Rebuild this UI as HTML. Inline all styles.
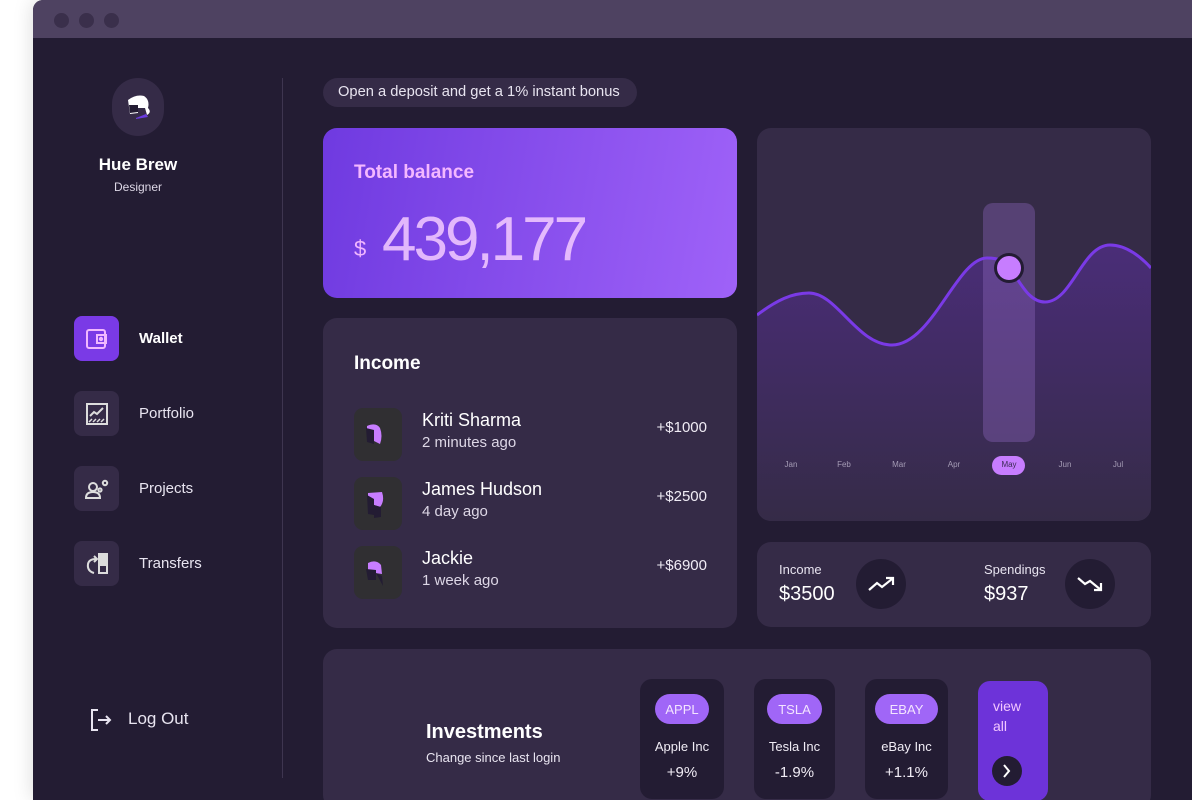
<!DOCTYPE html>
<html><head><meta charset="utf-8"><style>
*{margin:0;padding:0;box-sizing:border-box}
body{width:1192px;height:773px;overflow:hidden;background:#fff;font-family:"Liberation Sans",sans-serif;position:relative}
.win{position:absolute;left:33px;top:0;width:1175px;height:800px;background:#231c33;border-radius:10px 10px 0 0;overflow:hidden;box-shadow:0 0 20px rgba(0,0,0,.15)}
.bar{position:absolute;left:0;top:0;right:0;height:38px;background:#4e4261}
.dot{position:absolute;top:13px;width:15px;height:15px;border-radius:50%;background:#3a2f4b}
.a{position:absolute}
.card{position:absolute;background:#352b47;border-radius:14px}
.navi{position:absolute;left:41px;width:45px;height:45px;border-radius:8px;background:#352b47;display:flex;align-items:center;justify-content:center}
.navt{position:absolute;left:106px;color:#e8e4f0;font-size:15px}
.av{position:absolute;left:31px;width:48px;height:53px;border-radius:9px;background:#302f32}
.nm{position:absolute;left:99px;color:#fff;font-size:18px}
.tm{position:absolute;left:99px;color:#ddd7e6;font-size:15px}
.amt{position:absolute;right:30px;color:#f0ecf5;font-size:15px}
.mon{position:absolute;top:332px;font-size:8px;color:#a59cb5;width:40px;text-align:center}
.inv{position:absolute;top:680px;background:#231c33;border-radius:12px;height:120px}
.pill{position:absolute;top:15px;height:30px;border-radius:15px;background:#a066f7;color:#f3e4ff;font-size:13px;display:flex;align-items:center;justify-content:center}
.inm{position:absolute;top:60px;width:100%;text-align:center;color:#f0ecf5;font-size:13px}
</style></head><body>
<div class="win">
<div class="bar"><div class="dot" style="left:21px"></div><div class="dot" style="left:46px"></div><div class="dot" style="left:71px"></div></div>
<div class="a" style="left:249px;top:78px;width:1px;height:700px;background:#3e3550"></div>
<div class="a" style="left:79px;top:78px;width:52px;height:58px;border-radius:26px;background:#352b47">
<svg width="52" height="58" viewBox="0 0 52 58"><path d="M16 22 Q24 16 32 18 Q38 22 36 30 Q40 34 35 37 L33 30 L26 30 L26 35 L18 36 Z" fill="#fff"/><path d="M17 27 L26 27 L26 34 L18 35 Z" fill="#231c33"/><path d="M24 40 L34 36 L36 39 L24 41Z" fill="#6b3be0"/></svg></div>
<div class="a" style="left:0;width:210px;top:155px;text-align:center;color:#fff;font-size:17px;font-weight:bold">Hue Brew</div>
<div class="a" style="left:0;width:210px;top:180px;text-align:center;color:#ddd7e6;font-size:12px">Designer</div>
<div class="navi" style="top:316px;background:#7a3ae6"><svg width="26" height="26" viewBox="0 0 26 26" fill="none" stroke="#f1b8ff" stroke-width="2"><rect x="3" y="4" width="18" height="18" rx="2"/><rect x="13" y="9" width="9" height="8"/><circle cx="17" cy="13" r="1.2" fill="#f1b8ff"/></svg></div>
<div class="navt" style="top:330px;font-weight:bold;color:#fff">Wallet</div>
<div class="navi" style="top:391px"><svg width="26" height="26" viewBox="0 0 26 26" fill="none" stroke="#ddd" stroke-width="2"><rect x="3" y="3" width="20" height="20"/><path d="M6 15 L10 11 L13 13 L19 7"/><path d="M5 21l3-3M9 21l3-3M13 21l3-3M17 21l3-3" stroke-width="1.5"/></svg></div>
<div class="navt" style="top:405px">Portfolio</div>
<div class="navi" style="top:466px"><svg width="28" height="26" viewBox="0 0 28 26" fill="none" stroke="#ddd" stroke-width="2"><circle cx="10" cy="11" r="4"/><path d="M3 22 Q3 16 10 16 Q17 16 17 22 Z"/><circle cx="22" cy="7" r="2.2"/><circle cx="17" cy="14" r="1.6"/></svg></div>
<div class="navt" style="top:480px">Projects</div>
<div class="navi" style="top:541px"><svg width="28" height="26" viewBox="0 0 28 26" fill="none" stroke="#ddd" stroke-width="2"><path d="M11 22 Q4 20 5 13 Q6 8 13 8"/><path d="M11 5 L14 8 L11 11"/><rect x="16" y="3" width="8" height="9" fill="#ddd"/><rect x="16" y="14" width="8" height="8"/></svg></div>
<div class="navt" style="top:555px">Transfers</div>
<svg class="a" style="left:56px;top:707px" width="26" height="26" viewBox="0 0 26 26" fill="none" stroke="#e8e4f0" stroke-width="2"><path d="M9 3 H3 V23 H9"/><path d="M9 13 H21 M17 9 L21 13 L17 17"/></svg>
<div class="a" style="left:95px;top:709px;color:#e8e4f0;font-size:17px">Log Out</div>
<div class="a" style="left:290px;top:78px;width:314px;height:29px;border-radius:15px;background:#352b47;color:#e8e4f0;font-size:14.7px;line-height:29px;padding-left:15px;white-space:nowrap">Open a deposit and get a 1% instant bonus</div>
<div class="card" style="left:290px;top:128px;width:414px;height:170px;background:linear-gradient(100deg,#6f3ae0,#9f62f8)">
<div class="a" style="left:31px;top:34px;color:#f4b8ff;font-size:19px;font-weight:bold">Total balance</div>
<div class="a" style="left:31px;top:108px;color:#f0b6ff;font-size:22px;font-weight:300">$</div>
<div class="a" style="left:59px;top:76px;color:rgba(245,205,255,.85);font-size:62px;font-weight:300;letter-spacing:-3px">439,177</div>
</div>
<div class="card" style="left:290px;top:318px;width:414px;height:310px">
<div class="a" style="left:31px;top:35px;color:#fff;font-size:19px;font-weight:bold">Income</div>
<div class="av" style="top:90px"><svg width="48" height="53"><path d="M13 18 Q22 14 26 20 Q29 28 26 36 L20 33 L20 26 L13 26Z" fill="#c77dff"/><path d="M12 20 L20 22 L20 36 L13 34Z" fill="#231c33"/></svg></div>
<div class="nm" style="top:92px">Kriti Sharma</div><div class="tm" style="top:116px">2 minutes ago</div><div class="amt" style="top:101px">+$1000</div>
<div class="av" style="top:159px"><svg width="48" height="53"><path d="M14 16 L28 15 Q31 24 26 30 L20 28 L14 27Z" fill="#c77dff"/><path d="M13 18 L20 22 L20 38 L14 37Z M20 28 L27 30 L27 40 L20 41Z" fill="#231c33"/></svg></div>
<div class="nm" style="top:161px">James Hudson</div><div class="tm" style="top:185px">4 day ago</div><div class="amt" style="top:170px">+$2500</div>
<div class="av" style="top:228px"><svg width="48" height="53"><path d="M14 17 Q22 13 27 19 L28 28 L14 26Z" fill="#c77dff"/><path d="M12 23 L22 24 L22 34 L14 34Z M22 27 L28 30 L29 40 Z" fill="#231c33"/></svg></div>
<div class="nm" style="top:230px">Jackie</div><div class="tm" style="top:254px">1 week ago</div><div class="amt" style="top:239px">+$6900</div>
</div>
<div class="card" style="left:724px;top:128px;width:394px;height:393px;overflow:hidden">
<svg class="a" style="left:0;top:0" width="394" height="393">
<defs><linearGradient id="g" x1="0" y1="0" x2="0" y2="1"><stop offset="0" stop-color="#4a2d78"/><stop offset="1" stop-color="#352b47"/></linearGradient></defs>
<path d="M0 187 C20 172 35 165 52 165 C80 165 100 217 135 217 C175 217 200 130 230 130 C245 130 250 135 252 140 C262 150 270 174 288 174 C315 174 325 117 353 117 C370 117 385 130 394 140 L394 393 L0 393Z" fill="url(#g)"/>
<rect x="226" y="75" width="52" height="239" rx="10" fill="#8a64b8" opacity=".4"/>
<path d="M0 187 C20 172 35 165 52 165 C80 165 100 217 135 217 C175 217 200 130 230 130 C245 130 250 135 252 140 C262 150 270 174 288 174 C315 174 325 117 353 117 C370 117 385 130 394 140" fill="none" stroke="#7a3ae6" stroke-width="3"/>
<circle cx="252" cy="140" r="15" fill="#231c33"/><circle cx="252" cy="140" r="12" fill="#c77dff"/>
<rect x="235" y="328" width="33" height="19" rx="9.5" fill="#c77dff"/>
</svg>
<div class="mon" style="left:14px">Jan</div><div class="mon" style="left:67px">Feb</div><div class="mon" style="left:122px">Mar</div><div class="mon" style="left:177px">Apr</div><div class="mon" style="left:232px;color:#3a2a55">May</div><div class="mon" style="left:288px">Jun</div><div class="mon" style="left:341px">Jul</div>
</div>
<div class="card" style="left:724px;top:542px;width:394px;height:85px">
<div class="a" style="left:22px;top:20px;color:#e8e4f0;font-size:13px">Income</div>
<div class="a" style="left:22px;top:41px;color:#fff;font-size:20px">$3500</div>
<div class="a" style="left:99px;top:17px;width:50px;height:50px;border-radius:50%;background:#231c33"><svg width="50" height="50" fill="none" stroke="#fff" stroke-width="2.2"><path d="M13 31 L21 24 L26 28 L36 20 M30 19 L37 19 L37 26"/></svg></div>
<div class="a" style="left:227px;top:20px;color:#e8e4f0;font-size:13px">Spendings</div>
<div class="a" style="left:227px;top:41px;color:#fff;font-size:20px">$937</div>
<div class="a" style="left:308px;top:17px;width:50px;height:50px;border-radius:50%;background:#231c33"><svg width="50" height="50" fill="none" stroke="#fff" stroke-width="2.2"><path d="M13 19 L20 25 L25 22 L36 31 M36 24 L36 31 L29 31"/></svg></div>
</div>
<div class="card" style="left:290px;top:649px;width:828px;height:160px">
<div class="a" style="left:103px;top:72px;color:#fff;font-size:20px;font-weight:bold">Investments</div>
<div class="a" style="left:103px;top:101px;color:#e8e4f0;font-size:13px">Change since last login</div>
</div>
<div class="inv" style="left:607px;width:84px;top:679px"><div class="pill" style="left:15px;width:54px">APPL</div><div class="inm">Apple Inc</div><div class="inm" style="top:85px;font-size:15px">+9%</div></div>
<div class="inv" style="left:721px;width:81px;top:679px"><div class="pill" style="left:13px;width:55px">TSLA</div><div class="inm">Tesla Inc</div><div class="inm" style="top:85px;font-size:15px">-1.9%</div></div>
<div class="inv" style="left:832px;width:83px;top:679px"><div class="pill" style="left:10px;width:63px">EBAY</div><div class="inm">eBay Inc</div><div class="inm" style="top:85px;font-size:15px">+1.1%</div></div>
<div class="inv" style="left:945px;width:70px;top:681px;background:#6d33d9"><div class="a" style="left:15px;top:15px;color:#f3c6ff;font-size:14px;line-height:20px">view<br>all</div><div class="a" style="left:14px;top:75px;width:30px;height:30px;border-radius:50%;background:#231c33"><svg width="30" height="30" fill="none" stroke="#fff" stroke-width="2"><path d="M12 9 L17 15 L12 21"/></svg></div></div>
</div>
</body></html>
